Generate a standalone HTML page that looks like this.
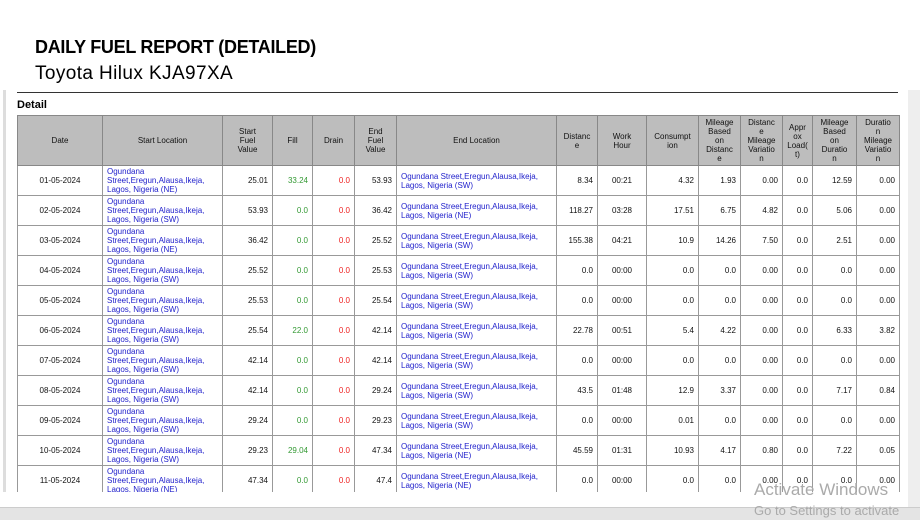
<!DOCTYPE html>
<html><head><meta charset="utf-8"><style>
*{margin:0;padding:0;box-sizing:border-box}
body{width:920px;height:520px;overflow:hidden;background:#fff;font-family:"Liberation Sans",Arial,sans-serif;position:relative}
.t1{position:absolute;left:35px;top:37px;font-size:18px;font-weight:bold;color:#000;letter-spacing:-0.3px}
.t2{position:absolute;left:35px;top:63px;font-size:19px;color:#000;letter-spacing:0.4px}
.hr{position:absolute;left:17px;top:92px;width:881px;height:1px;background:#333}
.det{position:absolute;left:17px;top:99px;font-size:11px;font-weight:bold}
.lbar{position:absolute;left:3px;top:90px;width:3px;height:402px;background:#ddd}
.rbar{position:absolute;left:908px;top:90px;width:12px;height:420px;background:#eee}
.bbar{position:absolute;left:0;top:507px;width:920px;height:13px;background:#e4e4e4;border-top:1px solid #ccc}
.wrap{position:absolute;left:17px;top:115px;width:883px;height:377px;overflow:hidden}
table{border-collapse:collapse;table-layout:fixed;font-size:8px;color:#111}
th{background:#bdbdbd;font-weight:normal;height:50px;line-height:9px;border:1px solid #888;text-align:center;padding:0 1px}
td{height:30px;border:1px solid #999;padding:0 4px;line-height:9px;text-align:right}
td.c{text-align:center}
td.l{text-align:left;color:#22c;padding:0 4px}
.g{color:#393}.r{color:#e22}
.act{position:absolute;left:754px;top:480px;font-size:17px;color:#aaa}
.act2{position:absolute;left:754px;top:503px;font-size:13px;color:#aaa}
</style></head><body>
<div class="t1">DAILY FUEL REPORT (DETAILED)</div>
<div class="t2">Toyota Hilux KJA97XA</div>
<div class="hr"></div>
<div class="lbar"></div><div class="rbar"></div>
<div class="det">Detail</div>
<div class="wrap"><table>
<colgroup><col style="width:85px"><col style="width:120px"><col style="width:50px"><col style="width:40px"><col style="width:42px"><col style="width:42px"><col style="width:160px"><col style="width:41px"><col style="width:49px"><col style="width:52px"><col style="width:42px"><col style="width:42px"><col style="width:30px"><col style="width:44px"><col style="width:43px"></colgroup>
<tr><th>Date</th><th>Start Location</th><th>Start<br>Fuel<br>Value</th><th>Fill</th><th>Drain</th><th>End<br>Fuel<br>Value</th><th>End Location</th><th>Distanc<br>e</th><th>Work<br>Hour</th><th>Consumpt<br>ion</th><th>Mileage<br>Based<br>on<br>Distanc<br>e</th><th>Distanc<br>e<br>Mileage<br>Variatio<br>n</th><th>Appr<br>ox<br>Load(<br>t)</th><th>Mileage<br>Based<br>on<br>Duratio<br>n</th><th>Duratio<br>n<br>Mileage<br>Variatio<br>n</th></tr>
<tr><td class="c">01-05-2024</td><td class="l">Ogundana<br>Street,Eregun,Alausa,Ikeja,<br>Lagos, Nigeria (NE)</td><td>25.01</td><td class="g">33.24</td><td class="r">0.0</td><td>53.93</td><td class="l">Ogundana Street,Eregun,Alausa,Ikeja,<br>Lagos, Nigeria (SW)</td><td>8.34</td><td class="c">00:21</td><td>4.32</td><td>1.93</td><td>0.00</td><td>0.0</td><td>12.59</td><td>0.00</td></tr>
<tr><td class="c">02-05-2024</td><td class="l">Ogundana<br>Street,Eregun,Alausa,Ikeja,<br>Lagos, Nigeria (SW)</td><td>53.93</td><td class="g">0.0</td><td class="r">0.0</td><td>36.42</td><td class="l">Ogundana Street,Eregun,Alausa,Ikeja,<br>Lagos, Nigeria (NE)</td><td>118.27</td><td class="c">03:28</td><td>17.51</td><td>6.75</td><td>4.82</td><td>0.0</td><td>5.06</td><td>0.00</td></tr>
<tr><td class="c">03-05-2024</td><td class="l">Ogundana<br>Street,Eregun,Alausa,Ikeja,<br>Lagos, Nigeria (NE)</td><td>36.42</td><td class="g">0.0</td><td class="r">0.0</td><td>25.52</td><td class="l">Ogundana Street,Eregun,Alausa,Ikeja,<br>Lagos, Nigeria (SW)</td><td>155.38</td><td class="c">04:21</td><td>10.9</td><td>14.26</td><td>7.50</td><td>0.0</td><td>2.51</td><td>0.00</td></tr>
<tr><td class="c">04-05-2024</td><td class="l">Ogundana<br>Street,Eregun,Alausa,Ikeja,<br>Lagos, Nigeria (SW)</td><td>25.52</td><td class="g">0.0</td><td class="r">0.0</td><td>25.53</td><td class="l">Ogundana Street,Eregun,Alausa,Ikeja,<br>Lagos, Nigeria (SW)</td><td>0.0</td><td class="c">00:00</td><td>0.0</td><td>0.0</td><td>0.00</td><td>0.0</td><td>0.0</td><td>0.00</td></tr>
<tr><td class="c">05-05-2024</td><td class="l">Ogundana<br>Street,Eregun,Alausa,Ikeja,<br>Lagos, Nigeria (SW)</td><td>25.53</td><td class="g">0.0</td><td class="r">0.0</td><td>25.54</td><td class="l">Ogundana Street,Eregun,Alausa,Ikeja,<br>Lagos, Nigeria (SW)</td><td>0.0</td><td class="c">00:00</td><td>0.0</td><td>0.0</td><td>0.00</td><td>0.0</td><td>0.0</td><td>0.00</td></tr>
<tr><td class="c">06-05-2024</td><td class="l">Ogundana<br>Street,Eregun,Alausa,Ikeja,<br>Lagos, Nigeria (SW)</td><td>25.54</td><td class="g">22.0</td><td class="r">0.0</td><td>42.14</td><td class="l">Ogundana Street,Eregun,Alausa,Ikeja,<br>Lagos, Nigeria (SW)</td><td>22.78</td><td class="c">00:51</td><td>5.4</td><td>4.22</td><td>0.00</td><td>0.0</td><td>6.33</td><td>3.82</td></tr>
<tr><td class="c">07-05-2024</td><td class="l">Ogundana<br>Street,Eregun,Alausa,Ikeja,<br>Lagos, Nigeria (SW)</td><td>42.14</td><td class="g">0.0</td><td class="r">0.0</td><td>42.14</td><td class="l">Ogundana Street,Eregun,Alausa,Ikeja,<br>Lagos, Nigeria (SW)</td><td>0.0</td><td class="c">00:00</td><td>0.0</td><td>0.0</td><td>0.00</td><td>0.0</td><td>0.0</td><td>0.00</td></tr>
<tr><td class="c">08-05-2024</td><td class="l">Ogundana<br>Street,Eregun,Alausa,Ikeja,<br>Lagos, Nigeria (SW)</td><td>42.14</td><td class="g">0.0</td><td class="r">0.0</td><td>29.24</td><td class="l">Ogundana Street,Eregun,Alausa,Ikeja,<br>Lagos, Nigeria (SW)</td><td>43.5</td><td class="c">01:48</td><td>12.9</td><td>3.37</td><td>0.00</td><td>0.0</td><td>7.17</td><td>0.84</td></tr>
<tr><td class="c">09-05-2024</td><td class="l">Ogundana<br>Street,Eregun,Alausa,Ikeja,<br>Lagos, Nigeria (SW)</td><td>29.24</td><td class="g">0.0</td><td class="r">0.0</td><td>29.23</td><td class="l">Ogundana Street,Eregun,Alausa,Ikeja,<br>Lagos, Nigeria (SW)</td><td>0.0</td><td class="c">00:00</td><td>0.01</td><td>0.0</td><td>0.00</td><td>0.0</td><td>0.0</td><td>0.00</td></tr>
<tr><td class="c">10-05-2024</td><td class="l">Ogundana<br>Street,Eregun,Alausa,Ikeja,<br>Lagos, Nigeria (SW)</td><td>29.23</td><td class="g">29.04</td><td class="r">0.0</td><td>47.34</td><td class="l">Ogundana Street,Eregun,Alausa,Ikeja,<br>Lagos, Nigeria (NE)</td><td>45.59</td><td class="c">01:31</td><td>10.93</td><td>4.17</td><td>0.80</td><td>0.0</td><td>7.22</td><td>0.05</td></tr>
<tr><td class="c">11-05-2024</td><td class="l">Ogundana<br>Street,Eregun,Alausa,Ikeja,<br>Lagos, Nigeria (NE)</td><td>47.34</td><td class="g">0.0</td><td class="r">0.0</td><td>47.4</td><td class="l">Ogundana Street,Eregun,Alausa,Ikeja,<br>Lagos, Nigeria (NE)</td><td>0.0</td><td class="c">00:00</td><td>0.0</td><td>0.0</td><td>0.00</td><td>0.0</td><td>0.0</td><td>0.00</td></tr>
</table></div>
<div class="bbar"></div>
<div class="act">Activate Windows</div>
<div class="act2">Go to Settings to activate</div>
</body></html>
